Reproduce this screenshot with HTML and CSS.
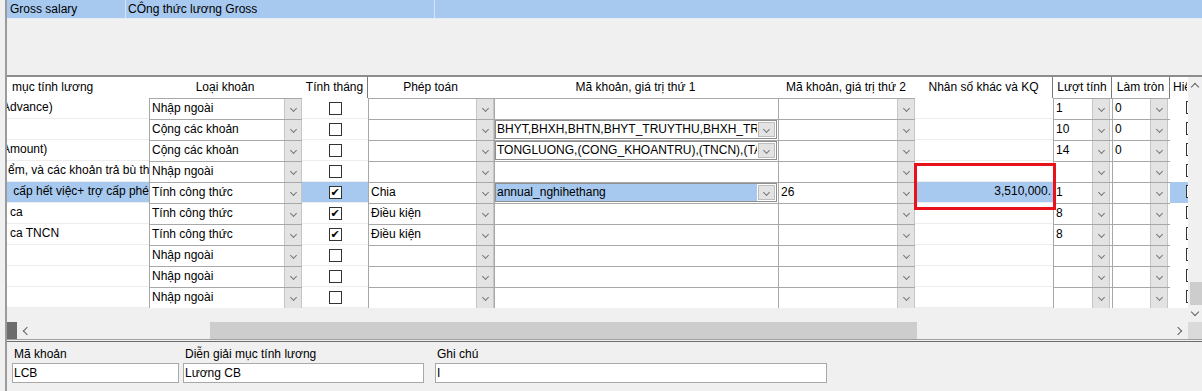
FILE: index.html
```html
<!DOCTYPE html>
<html lang="vi">
<head>
	<meta charset="UTF-8">
	<title>Công thức lương</title>
	<link rel="stylesheet" href="styles.css">
</head>
<body>
	<div class="window">
		<div class="master">
			<div class="mcell m1">Gross salary</div>
			<div class="mcell m2">CÔng thức lương Gross</div>
			<div class="mcell m3"></div>
		</div>
		<div class="spacer"></div>

		<div class="grid-box">
			<div class="grid-body">
				<div class="rows">
					<div class="row head">
						<div class="th left">mục tính lương</div>
						<div class="th">Loại khoản</div>
						<div class="th dark">Tính tháng</div>
						<div class="th">Phép toán</div>
						<div class="th">Mã khoản, giá trị thứ 1</div>
						<div class="th">Mã khoản, giá trị thứ 2</div>
						<div class="th dark">Nhân số khác và KQ</div>
						<div class="th dark">Lượt tính</div>
						<div class="th dark">Làm tròn</div>
						<div class="th left">Hiển thị</div>
					</div>

					<!-- 1 -->
					<div class="row">
						<div class="cell t1 in8">Advance)</div>
						<div class="combo"><span class="val">Nhập ngoài</span><span class="btn"></span></div>
						<div class="cell chk"><span class="box"></span></div>
						<div class="combo"><span class="val"></span><span class="btn"></span></div>
						<div class="c5"></div>
						<div class="combo"><span class="val"></span><span class="btn"></span></div>
						<div class="cell"></div>
						<div class="combo narrow"><span class="val">1</span><span class="btn"></span></div>
						<div class="combo narrow"><span class="val">0</span><span class="btn"></span></div>
						<div class="cell c10"><span class="box"></span></div>
					</div>
					<!-- 2 -->
					<div class="row">
						<div class="cell t1"></div>
						<div class="combo"><span class="val">Cộng các khoản</span><span class="btn"></span></div>
						<div class="cell chk"><span class="box"></span></div>
						<div class="combo"><span class="val"></span><span class="btn"></span></div>
						<div class="c5"><div class="icombo"><span class="val">BHYT,BHXH,BHTN,BHYT_TRUYTHU,BHXH_TRUYTHU</span><span class="ibtn"></span></div></div>
						<div class="combo"><span class="val"></span><span class="btn"></span></div>
						<div class="cell"></div>
						<div class="combo narrow"><span class="val">10</span><span class="btn"></span></div>
						<div class="combo narrow"><span class="val">0</span><span class="btn"></span></div>
						<div class="cell c10"><span class="box"></span></div>
					</div>
					<!-- 3 -->
					<div class="row">
						<div class="cell t1 in8">Amount)</div>
						<div class="combo"><span class="val">Cộng các khoản</span><span class="btn"></span></div>
						<div class="cell chk"><span class="box"></span></div>
						<div class="combo"><span class="val"></span><span class="btn"></span></div>
						<div class="c5"><div class="icombo"><span class="val">TONGLUONG,(CONG_KHOANTRU),(TNCN),(TAMUNG)</span><span class="ibtn"></span></div></div>
						<div class="combo"><span class="val"></span><span class="btn"></span></div>
						<div class="cell"></div>
						<div class="combo narrow"><span class="val">14</span><span class="btn"></span></div>
						<div class="combo narrow"><span class="val">0</span><span class="btn"></span></div>
						<div class="cell c10"><span class="box"></span></div>
					</div>
					<!-- 4 -->
					<div class="row">
						<div class="cell t1 in2">ểm, và các khoản trả bù thu nhập</div>
						<div class="combo"><span class="val">Nhập ngoài</span><span class="btn"></span></div>
						<div class="cell chk"><span class="box"></span></div>
						<div class="combo"><span class="val"></span><span class="btn"></span></div>
						<div class="c5"></div>
						<div class="combo"><span class="val"></span><span class="btn"></span></div>
						<div class="cell"></div>
						<div class="combo narrow"><span class="val"></span><span class="btn"></span></div>
						<div class="combo narrow"><span class="val"></span><span class="btn"></span></div>
						<div class="cell c10"><span class="box"></span></div>
					</div>
					<!-- 5 selected -->
					<div class="row">
						<div class="cell t1 sel">&nbsp;cấp hết việc+ trợ cấp phép</div>
						<div class="combo"><span class="val">Tính công thức</span><span class="btn"></span></div>
						<div class="cell chk sel"><span class="box">✔</span></div>
						<div class="combo"><span class="val">Chia</span><span class="btn"></span></div>
						<div class="c5"><div class="icombo sel"><span class="val">annual_nghihethang</span><span class="ibtn"></span></div></div>
						<div class="combo"><span class="val">26</span><span class="btn"></span></div>
						<div class="cell num sel">3,510,000.</div>
						<div class="combo narrow"><span class="val">1</span><span class="btn"></span></div>
						<div class="combo narrow"><span class="val"></span><span class="btn"></span></div>
						<div class="cell c10 sel"><span class="box"></span></div>
					</div>
					<!-- 6 -->
					<div class="row">
						<div class="cell t1">ca</div>
						<div class="combo"><span class="val">Tính công thức</span><span class="btn"></span></div>
						<div class="cell chk"><span class="box">✔</span></div>
						<div class="combo"><span class="val">Điều kiện</span><span class="btn"></span></div>
						<div class="c5"></div>
						<div class="combo"><span class="val"></span><span class="btn"></span></div>
						<div class="cell"></div>
						<div class="combo narrow"><span class="val">8</span><span class="btn"></span></div>
						<div class="combo narrow"><span class="val"></span><span class="btn"></span></div>
						<div class="cell c10"><span class="box"></span></div>
					</div>
					<!-- 7 -->
					<div class="row">
						<div class="cell t1">ca TNCN</div>
						<div class="combo"><span class="val">Tính công thức</span><span class="btn"></span></div>
						<div class="cell chk"><span class="box">✔</span></div>
						<div class="combo"><span class="val">Điều kiện</span><span class="btn"></span></div>
						<div class="c5"></div>
						<div class="combo"><span class="val"></span><span class="btn"></span></div>
						<div class="cell"></div>
						<div class="combo narrow"><span class="val">8</span><span class="btn"></span></div>
						<div class="combo narrow"><span class="val"></span><span class="btn"></span></div>
						<div class="cell c10"><span class="box"></span></div>
					</div>
					<!-- 8 -->
					<div class="row">
						<div class="cell t1"></div>
						<div class="combo"><span class="val">Nhập ngoài</span><span class="btn"></span></div>
						<div class="cell chk"><span class="box"></span></div>
						<div class="combo"><span class="val"></span><span class="btn"></span></div>
						<div class="c5"></div>
						<div class="combo"><span class="val"></span><span class="btn"></span></div>
						<div class="cell"></div>
						<div class="combo narrow"><span class="val"></span><span class="btn"></span></div>
						<div class="combo narrow"><span class="val"></span><span class="btn"></span></div>
						<div class="cell c10"><span class="box"></span></div>
					</div>
					<!-- 9 -->
					<div class="row">
						<div class="cell t1"></div>
						<div class="combo"><span class="val">Nhập ngoài</span><span class="btn"></span></div>
						<div class="cell chk"><span class="box"></span></div>
						<div class="combo"><span class="val"></span><span class="btn"></span></div>
						<div class="c5"></div>
						<div class="combo"><span class="val"></span><span class="btn"></span></div>
						<div class="cell"></div>
						<div class="combo narrow"><span class="val"></span><span class="btn"></span></div>
						<div class="combo narrow"><span class="val"></span><span class="btn"></span></div>
						<div class="cell c10"><span class="box"></span></div>
					</div>
					<!-- 10 -->
					<div class="row">
						<div class="cell t1"></div>
						<div class="combo"><span class="val">Nhập ngoài</span><span class="btn"></span></div>
						<div class="cell chk"><span class="box"></span></div>
						<div class="combo"><span class="val"></span><span class="btn"></span></div>
						<div class="c5"></div>
						<div class="combo"><span class="val"></span><span class="btn"></span></div>
						<div class="cell"></div>
						<div class="combo narrow"><span class="val"></span><span class="btn"></span></div>
						<div class="combo narrow"><span class="val"></span><span class="btn"></span></div>
						<div class="cell c10"><span class="box"></span></div>
					</div>
				</div>

				<div class="vscroll">
					<div class="arr up"></div>
					<div class="track"><div class="thumb"></div></div>
					<div class="arr down"></div>
				</div>
				<div class="hscroll">
					<div class="stub"></div>
					<div class="arr left"></div>
					<div class="track"><div class="thumb"></div></div>
					<div class="arr right"></div>
				</div>
				<div class="corner"></div>

				<div class="mark"></div>
			</div>
		</div>

		<div class="sep"></div>

		<div class="detail">
			<div class="field f1">
				<label>Mã khoản</label>
				<div class="input">LCB</div>
			</div>
			<div class="field f2">
				<label>Diễn giải mục tính lương</label>
				<div class="input">Lương CB</div>
			</div>
			<div class="field f3">
				<label>Ghi chú</label>
				<div class="input">I</div>
			</div>
		</div>
	</div>
</body>
</html>
```
FILE: styles.css
```css
*{
	margin:0;
	padding:0;
	box-sizing:border-box;
}

body{
	background-color:#f0f0f0;
	font:12px "Liberation Sans", Arial, sans-serif;
	color:#000;
	width:1202px;
	height:391px;
	overflow:hidden;
}

.window{
	margin-left:5px;
	border-left:2px solid #9b9b9b;
	height:391px;
	display:flex;
	flex-direction:column;
}

/* master row */
.master{
	display:flex;
	height:19px;
	background-color:#a7c9ef;
	border-bottom:1px solid #e4edf8;
}
.mcell{
	line-height:18px;
	white-space:nowrap;
	border-right:1px solid #d6e4f6;
}
.m1{
	width:119px;
	padding-left:3px;
}
.m2{
	width:309px;
	padding-left:2px;
}
.m3{
	flex:1;
	border-right:0;
}

.spacer{
	height:56px;
}

/* grid */
.grid-box{
	border-top:2px solid #8d8d8d;
}
.grid-body{
	display:grid;
	grid-template-columns:1181px 14px;
	grid-template-rows:245px 17px;
	position:relative;
}
.rows{
	overflow:hidden;
	background-color:#f0f0f0;
}
.row{
	display:grid;
	grid-template-columns:142px 153px 66px 126px 284px 137px 138px 59px 58px 18px;
	height:21px;
}
.th{
	background-color:#fff;
	line-height:20px;
	text-align:center;
	white-space:nowrap;
	overflow:hidden;
	border-right:1px solid #fff;
}
.th.left{
	text-align:left;
	padding-left:5px;
}
.th.dark{
	border-right:1px solid #7a7a7a;
}
.head .th:last-child{
	padding-left:3px;
}

.cell{
	background-color:#fff;
	border-bottom:1px solid #ededed;
	line-height:19px;
	white-space:nowrap;
	overflow:hidden;
}
.t1{
	padding-left:3px;
}
.in8{
	text-indent:-8px;
}
.in2{
	text-indent:-2px;
}
.sel{
	background-color:#a7c9ef;
}
.num{
	text-align:right;
	padding-right:2px;
}

.chk{
	display:flex;
	align-items:center;
	justify-content:center;
}
.box{
	width:13px;
	height:13px;
	border:1px solid #333;
	background-color:#fff;
	display:flex;
	align-items:center;
	justify-content:center;
	font:11px "DejaVu Sans", sans-serif;
	line-height:1;
}
.c10{
	padding:3px 0 0 16px;
	border-bottom:0;
}

.combo{
	display:flex;
	height:21px;
	background-color:#fff;
	border-top:1px solid #a8a8a8;
	border-left:1px solid #a8a8a8;
}
.val{
	flex:1;
	padding-left:2px;
	line-height:19px;
	white-space:nowrap;
	overflow:hidden;
}
.btn{
	width:18px;
	background-color:#e3e3e3;
	border-left:1px solid #c6c6c6;
	border-right:1px solid #c6c6c6;
	display:flex;
	align-items:center;
	justify-content:center;
}
.btn::after,
.ibtn::after{
	content:"";
	width:4px;
	height:4px;
	border-right:1px solid #777;
	border-bottom:1px solid #777;
	transform:rotate(45deg);
	margin-top:-1px;
}
.narrow .btn{
	margin-right:2px;
}

.c5{
	background-color:#fff;
	border-top:1px solid #a8a8a8;
	border-left:1px solid #a8a8a8;
	padding:0 1px 1px 0;
}
.icombo{
	display:flex;
	height:100%;
	border:1px solid #8e8e8e;
	background-color:#fff;
}
.icombo .val{
	line-height:17px;
	padding-left:1px;
}
.icombo.sel .val{
	background-color:#a7c9ef;
}
.ibtn{
	width:17px;
	margin:1px;
	background-color:#e3e3e3;
	border:1px solid #bdbdbd;
	display:flex;
	align-items:center;
	justify-content:center;
}

/* scrollbars */
.vscroll{
	display:flex;
	flex-direction:column;
	background-color:#f0f0f0;
}
.arr{
	display:flex;
	align-items:center;
	justify-content:center;
}
.arr::after{
	content:"";
	width:5px;
	height:5px;
	border:0 solid #606060;
}
.vscroll .arr{
	height:17px;
}
.vscroll .track{
	flex:1;
	display:flex;
	flex-direction:column;
	justify-content:flex-end;
}
.vscroll .thumb{
	height:23px;
	margin-left:2px;
	background-color:#cdcdcd;
}
.up::after{
	border-left-width:1px;
	border-top-width:1px;
	transform:rotate(45deg);
	margin-top:3px;
}
.down::after{
	border-right-width:1px;
	border-bottom-width:1px;
	transform:rotate(45deg);
	margin-top:-3px;
}

.hscroll{
	display:flex;
	background-color:#f0f0f0;
}
.stub{
	width:10px;
	background-color:#6d6d6d;
}
.hscroll .arr{
	width:17px;
}
.hscroll .track{
	flex:1;
	padding-left:176px;
}
.hscroll .thumb{
	width:707px;
	height:100%;
	background-color:#cdcdcd;
}
.left::after{
	border-left-width:1px;
	border-bottom-width:1px;
	transform:rotate(45deg);
	margin-left:3px;
}
.right::after{
	border-right-width:1px;
	border-top-width:1px;
	transform:rotate(45deg);
	margin-left:-3px;
}
.corner{
	background-color:#dadada;
}

/* red highlight over the result cell */
.mark{
	position:absolute;
	left:907px;
	top:86px;
	width:142px;
	height:47px;
	border:3px solid #e8121a;
}

.sep{
	height:3px;
	border-top:1px solid #a0a0a0;
	border-bottom:1px solid #6c6c6c;
}

/* detail fields */
.detail{
	display:flex;
	padding:5px 0 0 5px;
}
.field{
	display:flex;
	flex-direction:column;
}
.field label{
	line-height:15px;
	padding-left:2px;
	margin-bottom:1px;
	white-space:nowrap;
}
.f1{
	width:167px;
	margin-right:4px;
}
.f2{
	width:241px;
	margin-right:11px;
}
.f3{
	width:392px;
}
.input{
	height:20px;
	border:1px solid #a9a9a9;
	background-color:#fff;
	padding-left:1px;
	line-height:18px;
	white-space:nowrap;
}
```
